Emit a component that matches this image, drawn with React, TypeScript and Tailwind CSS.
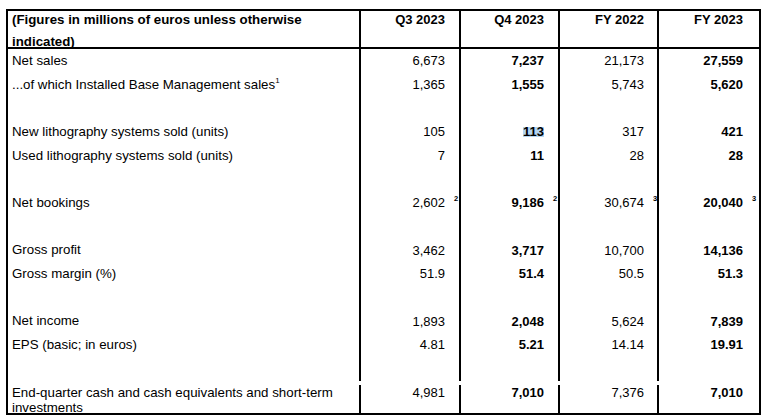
import React from "react";

type Row = {
  label: string;
  sup?: string;
  values: string[];
  notes?: string[];
  highlight?: boolean;
  tall?: boolean;
} | null;

const rows: Row[] = [
  { label: "Net sales", values: ["6,673", "7,237", "21,173", "27,559"] },
  { label: "...of which Installed Base Management sales", sup: "1", values: ["1,365", "1,555", "5,743", "5,620"] },
  null,
  { label: "New lithography systems sold (units)", values: ["105", "113", "317", "421"], highlight: true },
  { label: "Used lithography systems sold (units)", values: ["7", "11", "28", "28"] },
  null,
  { label: "Net bookings", values: ["2,602", "9,186", "30,674", "20,040"], notes: ["2", "2", "3", "3"] },
  null,
  { label: "Gross profit", values: ["3,462", "3,717", "10,700", "14,136"] },
  { label: "Gross margin (%)", values: ["51.9", "51.4", "50.5", "51.3"] },
  null,
  { label: "Net income", values: ["1,893", "2,048", "5,624", "7,839"] },
  { label: "EPS (basic; in euros)", values: ["4.81", "5.21", "14.14", "19.91"] },
  null,
  {
    label: "End-quarter cash and cash equivalents and short-term investments",
    values: ["4,981", "7,010", "7,376", "7,010"],
    tall: true,
  },
];

const headers = ["Q3 2023", "Q4 2023", "FY 2022", "FY 2023"];

// slot = space right of the number where the footnote marks sit
const cols = [
  { cell: "border-r-2 border-black", slot: "w-[14px]", bold: false },
  { cell: "border-r-2 border-black", slot: "w-[14px]", bold: true },
  { cell: "border-r-2 border-black", slot: "w-[13px]", bold: false },
  { cell: "", slot: "w-[16px]", bold: true },
];

const grid = "grid grid-cols-[353px_100px_99px_99px_100px]";

export default function App() {
  return (
    <div className="bg-white w-[762px] h-[417px] pt-[9px] pl-[6px] font-['Liberation_Sans',Arial,sans-serif] text-[13px] text-black">
      <div className="w-[755px] border-2 border-black">
        {/* header */}
        <div className={`${grid} h-[38px] border-b-2 border-black font-bold`}>
          <div className="border-r-2 border-black pl-[4px] -mt-[2px] leading-[22px] text-[13.3px]">
            (Figures in millions of euros unless otherwise indicated)
          </div>
          {headers.map((h, i) => (
            <div key={h} className={`${cols[i].cell} flex justify-end -mt-[2px] leading-[22px]`}>
              <span>{h}</span>
              <span className={cols[i].slot}></span>
            </div>
          ))}
        </div>

        {rows.map((row, r) => {
          if (!row) {
            return (
              <div key={r} className={`${grid} h-[23.7px]`}>
                <div className="border-r-2 border-black"></div>
                {cols.map((c, i) => (
                  <div key={i} className={c.cell}></div>
                ))}
              </div>
            );
          }
          return (
            <div
              key={r}
              className={`${grid} ${row.tall ? "h-[32.2px] items-start pt-[4px] leading-[15px]" : "h-[23.7px] items-center"}`}
            >
              <div className="border-r-2 border-black pl-[4px] self-stretch flex items-center text-[13.3px]">
                <span className={row.tall ? "self-start" : ""}>
                  {row.label}
                  {row.sup && <sup className="text-[8px] top-[-6px]">{row.sup}</sup>}
                </span>
              </div>
              {cols.map((c, i) => (
                <div key={i} className={`${c.cell} self-stretch flex justify-end ${row.tall ? "items-start" : "items-center"}`}>
                  {row.highlight && i === 1 ? (
                    <span className="font-bold inline-block bg-[#b5d5f0] leading-[10px] h-[10px] mt-[1px]">{row.values[i]}</span>
                  ) : (
                    <span className={c.bold ? "font-bold" : ""}>{row.values[i]}</span>
                  )}
                  <span className={`${c.slot} pl-[9px]`}>
                    {row.notes && <sup className="text-[7.5px] font-bold top-[-6px]">{row.notes[i]}</sup>}
                  </span>
                </div>
              ))}
            </div>
          );
        })}
      </div>
    </div>
  );
}
